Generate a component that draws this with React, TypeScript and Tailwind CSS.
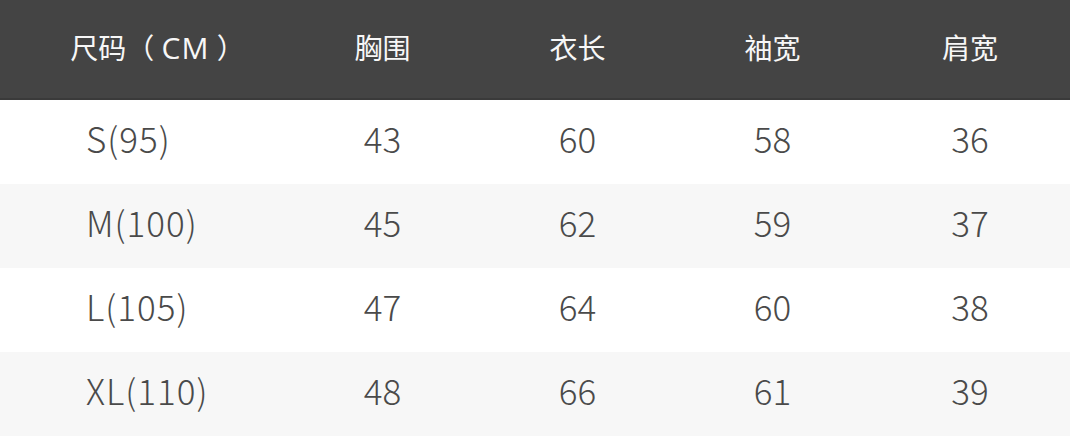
const headers = ["胸围", "衣长", "袖宽", "肩宽"];

const rows = [
  { size: "S(95)", values: ["43", "60", "58", "36"] },
  { size: "M(100)", values: ["45", "62", "59", "37"] },
  { size: "L(105)", values: ["47", "64", "60", "38"] },
  { size: "XL(110)", values: ["48", "66", "61", "39"] },
];

const App = () => {
  return (
    <div className="w-[1070px] h-[436px] bg-white overflow-hidden font-['Noto_Sans_CJK_SC',sans-serif]">
      {/* Header */}
      <div className="grid grid-cols-[285px_195px_195px_195px_200px] h-[100px] bg-[#444444] border-b-2 border-[#3a3a3a] text-[#f7f7f7] text-[28px]">
        <div className="flex items-center justify-center pl-[30px] pb-[4px] font-['Open_Sans','Noto_Sans_CJK_SC',sans-serif]">
          <span>
            尺码（ <span className="text-[30px] tracking-[1px]">CM</span> ）
          </span>
        </div>
        {headers.map((h) => (
          <div key={h} className="flex items-center justify-center pb-[4px]">
            {h}
          </div>
        ))}
      </div>

      {/* Rows */}
      {rows.map((row, i) => (
        <div
          key={row.size}
          className={`grid grid-cols-[285px_195px_195px_195px_200px] h-[84px] text-[35px] font-light text-[#4a4a4a] ${
            i % 2 === 1 ? "bg-[#f7f7f7]" : "bg-white"
          }`}
        >
          <div className="flex items-center pl-[86px] pb-[8px] tracking-[1px]">{row.size}</div>
          {row.values.map((v, j) => (
            <div key={j} className="flex items-center justify-center pb-[8px]">
              {v}
            </div>
          ))}
        </div>
      ))}
    </div>
  );
};

export default App;
